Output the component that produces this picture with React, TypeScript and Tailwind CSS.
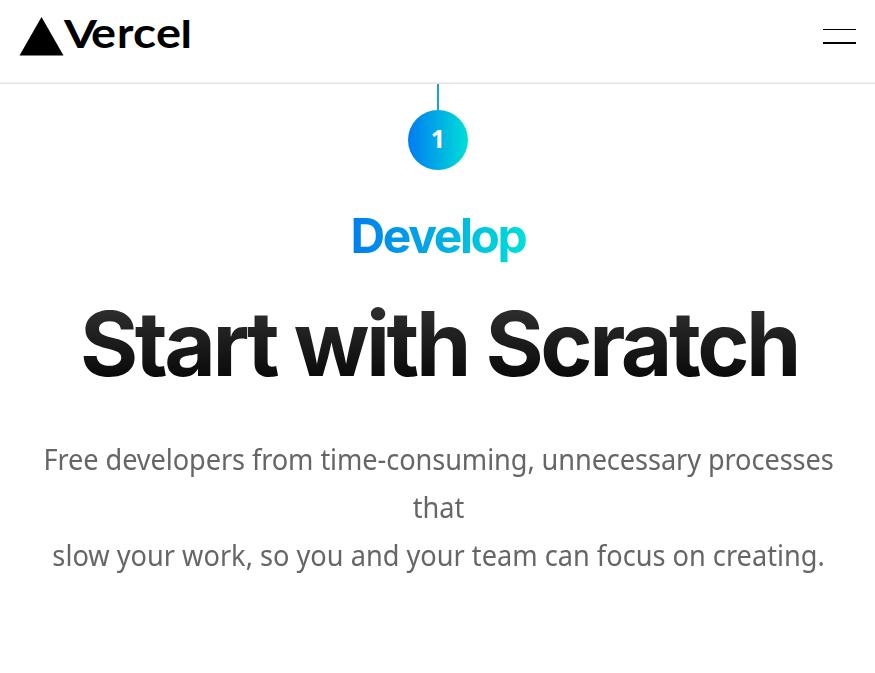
const wordmark = [
  { char: "e", x: 91, width: 25 },
  { char: "r", x: 117, width: 16.5 },
  { char: "c", x: 133, width: 23 },
  { char: "e", x: 156, width: 25 },
];

function Logo() {
  return (
    <svg width="200" height="64" viewBox="0 0 200 64" role="img" aria-label="Vercel">
      <path d="M41.5 17 63.5 55.5h-44Z" fill="#000" />
      <g className="font-[Lato,sans-serif] font-bold" fill="#000">
        <text x="64" y="48.3" fontSize="39" textLength="33" lengthAdjust="spacingAndGlyphs">
          V
        </text>
        {wordmark.map((l) => (
          <text key={l.x} x={l.x} y="48" fontSize="42" textLength={l.width} lengthAdjust="spacingAndGlyphs">
            {l.char}
          </text>
        ))}
        <text x="180.5" y="48" fontSize="38" textLength="11.5" lengthAdjust="spacingAndGlyphs">
          l
        </text>
      </g>
    </svg>
  );
}

export default function App() {
  return (
    <div className="h-[673px] overflow-hidden bg-white font-['Noto_Sans','Open_Sans',sans-serif]">
      <header className="flex h-[83px] items-start justify-between border-b border-[#f0f0f0] pr-[19px]">
        <Logo />
        <button aria-label="Menu" className="mt-[29px] flex w-[33px] flex-col gap-3">
          <span className="h-px w-full bg-black" />
          <span className="h-[2px] w-full bg-black" />
        </button>
      </header>
      <main className="flex flex-col items-center border-t border-[#e3e3e3] text-center">
        <div className="h-[26px] w-[2px] bg-[#1aa0e8]" />
        <div className="flex size-[60px] items-center justify-center rounded-full bg-linear-to-r/srgb from-[#007cf0] to-[#00dfd8] pb-[3px] pl-px text-[25px] font-bold text-white">
          1
        </div>
        <h3 className="mt-[36px] bg-linear-to-r/srgb from-[#007cf0] to-[#00dfd8] bg-clip-text pr-px pl-[2px] font-['Inter'] text-5xl leading-[60px] font-bold tracking-[-0.05em] text-transparent">
          Develop
        </h3>
        <h2 className="mt-[30px] bg-linear-to-b/srgb from-[#343434] to-[#020202] bg-clip-text pl-[3px] font-['Inter'] text-[89px] leading-[96px] font-bold tracking-[-0.039em] whitespace-nowrap text-transparent">
          Start with Scratch
        </h2>
        <p className="mt-[43px] scale-x-[0.937] pl-[2px] text-[29px] leading-[48px] whitespace-nowrap text-[#666]">
          <span className="tracking-[-0.1px]">Free developers from time-consuming, unnecessary processes</span>
          <br />
          that
          <br />
          slow your work, so you and your team can focus on creating.
        </p>
      </main>
    </div>
  );
}
